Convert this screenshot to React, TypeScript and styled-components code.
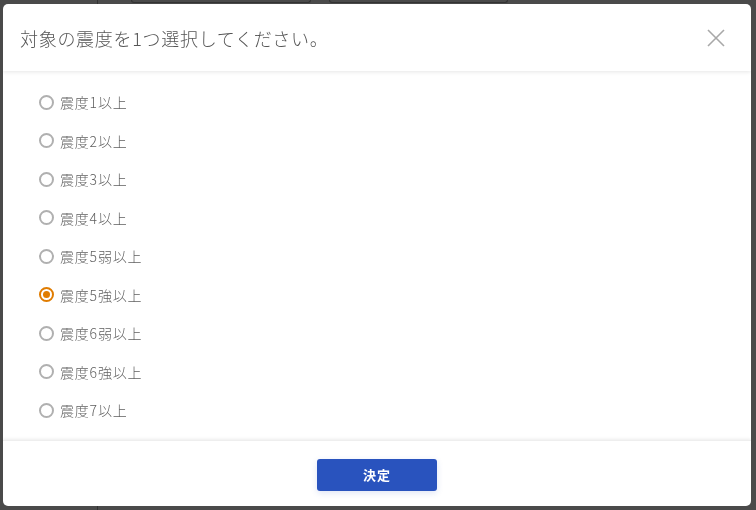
import { createGlobalStyle } from "styled-components";
import styled from "styled-components";
import { useState } from "react";

const levels = [
  "震度1以上",
  "震度2以上",
  "震度3以上",
  "震度4以上",
  "震度5弱以上",
  "震度5強以上",
  "震度6弱以上",
  "震度6強以上",
  "震度7以上",
];

const GlobalStyle = createGlobalStyle`
  html, body {
    margin: 0;
    padding: 0;
    background: #4a4a4a;
    font-family: "Noto Sans CJK JP", "Noto Sans", sans-serif;
  }
`;

const App = () => {
  const [selected, setSelected] = useState(5);

  return (
    <>
      <GlobalStyle />
      <Page>
        <Sidebar />
        <Main>
          <TopBox $width={178} />
          <TopBox $width={177} />
        </Main>
      </Page>
      <Overlay>
        <Modal role="dialog">
          <Header>
            <Title>対象の震度を1つ選択してください。</Title>
            <CloseButton aria-label="閉じる">
              <svg width="18" height="18" viewBox="0 0 18 18">
                <path
                  d="M1 1L17 17M17 1L1 17"
                  stroke="#a8a8a8"
                  strokeWidth="1.6"
                  fill="none"
                />
              </svg>
            </CloseButton>
          </Header>
          <Body>
            {levels.map((label, i) => (
              <Option key={label} onClick={() => setSelected(i)}>
                <Radio $checked={selected === i} />
                <OptionLabel>{label}</OptionLabel>
              </Option>
            ))}
          </Body>
          <Footer>
            <SubmitButton>決定</SubmitButton>
          </Footer>
        </Modal>
      </Overlay>
    </>
  );
};

export default App;

const Page = styled.div`
  display: flex;
  height: 510px;
  overflow: hidden;
`;

const Sidebar = styled.div`
  width: 97px;
  flex-shrink: 0;
  border-right: 1px solid #333;
`;

const Main = styled.div`
  display: flex;
  gap: 18px;
  padding-left: 33px;
  align-items: flex-start;
`;

const TopBox = styled.div<{ $width: number }>`
  width: ${(p) => p.$width}px;
  height: 2px;
  border: 1px solid #333;
  border-top: none;
  border-radius: 0 0 3px 3px;
`;

const Overlay = styled.div`
  position: fixed;
  inset: 0;
  display: flex;
  align-items: flex-start;
  padding: 4px 0 0 3px;
`;

const Modal = styled.div`
  width: 748px;
  height: 502px;
  background: #fff;
  border-radius: 5px;
  display: flex;
  flex-direction: column;
  overflow: hidden;
`;

const Header = styled.header`
  position: relative;
  z-index: 1;
  height: 67px;
  flex-shrink: 0;
  display: flex;
  align-items: center;
  justify-content: space-between;
  padding: 0 26px 0 17px;
  box-shadow: 0 1px 4px rgba(0, 0, 0, 0.1);
`;

const Title = styled.h2`
  margin: 0;
  font-size: 18px;
  font-weight: 300;
  color: #555;
  letter-spacing: 0.7px;
`;

const CloseButton = styled.button`
  display: flex;
  padding: 0;
  border: none;
  background: none;
  cursor: pointer;
`;

const Body = styled.div`
  flex: 1;
  display: flex;
  flex-direction: column;
  padding: 12px 0 0 36px;
`;

const Option = styled.label`
  display: flex;
  align-items: center;
  gap: 6px;
  height: 38.5px;
  cursor: pointer;
`;

const Radio = styled.span<{ $checked: boolean }>`
  box-sizing: border-box;
  width: 15px;
  height: 15px;
  border-radius: 50%;
  border: 2px solid ${(p) => (p.$checked ? "#e07c00" : "#b0b0b0")};
  display: flex;
  align-items: center;
  justify-content: center;

  &::after {
    content: "";
    display: ${(p) => (p.$checked ? "block" : "none")};
    width: 7px;
    height: 7px;
    border-radius: 50%;
    background: #e07c00;
  }
`;

const OptionLabel = styled.span`
  font-size: 14px;
  font-weight: 300;
  color: #5f5f5f;
  letter-spacing: 0.8px;
`;

const Footer = styled.footer`
  position: relative;
  height: 65px;
  flex-shrink: 0;
  display: flex;
  align-items: center;
  justify-content: center;
  box-shadow: 0 -1px 3px rgba(0, 0, 0, 0.08);
  border-top: 1px solid #eee;
`;

const SubmitButton = styled.button`
  width: 120px;
  height: 32px;
  margin-top: 2px;
  border: none;
  border-radius: 3px;
  background: #2953be;
  color: #fff;
  font-family: "Noto Sans CJK JP", sans-serif;
  font-size: 13px;
  font-weight: 700;
  letter-spacing: 1px;
  box-shadow: 0 2px 6px rgba(41, 83, 190, 0.15);
  cursor: pointer;
`;
